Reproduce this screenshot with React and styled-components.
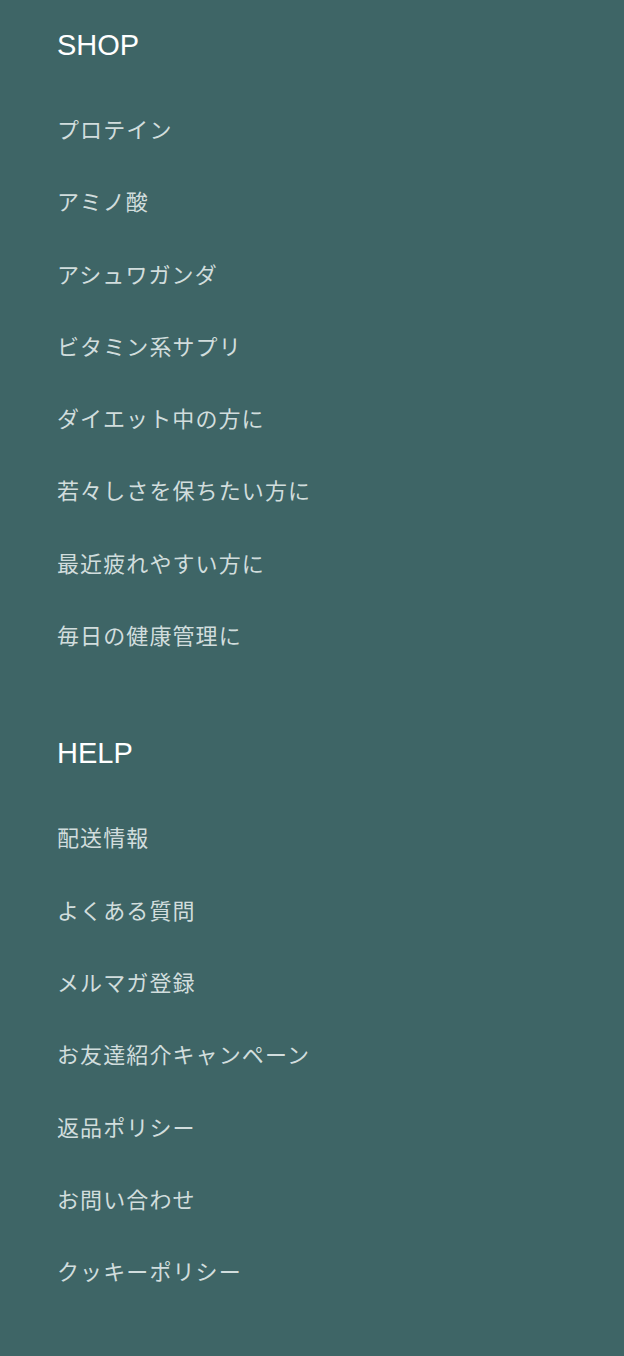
import React from 'react';
import styled, { createGlobalStyle } from 'styled-components';

const GlobalStyle = createGlobalStyle`
  html, body {
    margin: 0;
    padding: 0;
    background: #3e6566;
  }
  body {
    font-family: "Noto Sans CJK JP", "Noto Sans", sans-serif;
  }
`;

const sections = [
  {
    title: 'SHOP',
    links: [
      'プロテイン',
      'アミノ酸',
      'アシュワガンダ',
      'ビタミン系サプリ',
      'ダイエット中の方に',
      '若々しさを保ちたい方に',
      '最近疲れやすい方に',
      '毎日の健康管理に',
    ],
  },
  {
    title: 'HELP',
    links: [
      '配送情報',
      'よくある質問',
      'メルマガ登録',
      'お友達紹介キャンペーン',
      '返品ポリシー',
      'お問い合わせ',
      'クッキーポリシー',
    ],
  },
];

const Footer = styled.footer`
  min-height: 1356px;
  box-sizing: border-box;
  background: #3e6566;
  padding: 27px 57px 40px;
  display: flex;
  flex-direction: column;
  gap: 64px;
`;

const Column = styled.nav`
  display: flex;
  flex-direction: column;
  gap: 30px;
`;

const Heading = styled.h2`
  margin: 0;
  font-family: "Liberation Sans", Arial, sans-serif;
  font-weight: 400;
  font-size: 29px;
  line-height: 36px;
  color: #ffffff;
`;

const LinkList = styled.ul`
  list-style: none;
  margin: 0;
  padding: 0;
`;

const LinkItem = styled.li`
  padding: 19px 0 21px;
`;

const FooterLink = styled.a`
  display: block;
  height: 32.3px;
  line-height: 32.3px;
  font-size: 22px;
  letter-spacing: 1.1px;
  color: #d1dddd;
  text-decoration: none;
`;

export default function App() {
  return (
    <>
      <GlobalStyle />
      <Footer>
        {sections.map((section) => (
          <Column key={section.title}>
            <Heading>{section.title}</Heading>
            <LinkList>
              {section.links.map((label) => (
                <LinkItem key={label}>
                  <FooterLink href="#">{label}</FooterLink>
                </LinkItem>
              ))}
            </LinkList>
          </Column>
        ))}
      </Footer>
    </>
  );
}
